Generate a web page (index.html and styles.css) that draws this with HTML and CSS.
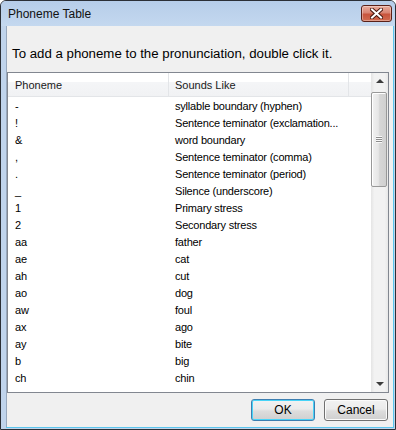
FILE: index.html
```html
<!DOCTYPE html>
<html lang="en">
<head>
    <meta charset="UTF-8">
    <meta name="viewport" content="width=device-width, initial-scale=1.0">
    <title>Phoneme Table</title>
    <link rel="stylesheet" href="styles.css">
</head>
<body>
    <div class="window">
        <div class="titlebar">
            <span class="title">Phoneme Table</span>
            <button class="close" type="button" title="Close">
                <svg width="13" height="11" viewBox="0 0 13 11">
                    <path d="M2 1.5 L11 9.5 M11 1.5 L2 9.5" stroke="#4a1a12" stroke-width="4" stroke-linecap="square"/>
                    <path d="M2 1.5 L11 9.5 M11 1.5 L2 9.5" stroke="#ffffff" stroke-width="2" stroke-linecap="square"/>
                </svg>
            </button>
        </div>
        <div class="client">
            <p class="hint">To add a phoneme to the pronunciation, double click it.</p>
            <div class="listbox">
                <div class="list-main">
                    <div class="header">
                        <div class="col col-ph">Phoneme</div>
                        <div class="col col-sl">Sounds Like</div>
                        <div class="col col-rest"></div>
                    </div>
                    <div class="rows">
                        <div class="row"><span class="cell c1">-</span><span class="cell c2">syllable boundary (hyphen)</span></div>
                        <div class="row"><span class="cell c1">!</span><span class="cell c2">Sentence teminator (exclamation...</span></div>
                        <div class="row"><span class="cell c1">&amp;</span><span class="cell c2">word boundary</span></div>
                        <div class="row"><span class="cell c1">,</span><span class="cell c2">Sentence teminator (comma)</span></div>
                        <div class="row"><span class="cell c1">.</span><span class="cell c2">Sentence teminator (period)</span></div>
                        <div class="row"><span class="cell c1">_</span><span class="cell c2">Silence (underscore)</span></div>
                        <div class="row"><span class="cell c1">1</span><span class="cell c2">Primary stress</span></div>
                        <div class="row"><span class="cell c1">2</span><span class="cell c2">Secondary stress</span></div>
                        <div class="row"><span class="cell c1">aa</span><span class="cell c2">father</span></div>
                        <div class="row"><span class="cell c1">ae</span><span class="cell c2">cat</span></div>
                        <div class="row"><span class="cell c1">ah</span><span class="cell c2">cut</span></div>
                        <div class="row"><span class="cell c1">ao</span><span class="cell c2">dog</span></div>
                        <div class="row"><span class="cell c1">aw</span><span class="cell c2">foul</span></div>
                        <div class="row"><span class="cell c1">ax</span><span class="cell c2">ago</span></div>
                        <div class="row"><span class="cell c1">ay</span><span class="cell c2">bite</span></div>
                        <div class="row"><span class="cell c1">b</span><span class="cell c2">big</span></div>
                        <div class="row"><span class="cell c1">ch</span><span class="cell c2">chin</span></div>
                    </div>
                </div>
                <div class="scrollbar">
                    <div class="arrow arrow-up"></div>
                    <div class="track">
                        <div class="thumb"><span class="grip"></span></div>
                    </div>
                    <div class="arrow arrow-down"></div>
                </div>
            </div>
            <div class="buttons">
                <button class="btn btn-default" type="button">OK</button>
                <button class="btn" type="button">Cancel</button>
            </div>
        </div>
    </div>
</body>
</html>
```

FILE: styles.css
```css
body {
    margin: 0;
    background: #ffffff;
    font-family: "Liberation Sans", Arial, sans-serif;
}
.window {
    width: 396px;
    height: 430px;
    box-sizing: border-box;
    border: 1px solid #2b2f36;
    border-radius: 6px 6px 0 0;
    background: #c0d4ec;
    display: flex;
    flex-direction: column;
    overflow: hidden;
}
.titlebar {
    height: 25px;
    flex: none;
    display: flex;
    align-items: flex-start;
    justify-content: space-between;
    background: linear-gradient(#b6cde9, #c4d8ef);
}
.title {
    margin: 5px 0 0 7px;
    font-size: 12px;
    line-height: 16px;
    color: #111;
}
.close {
    width: 31px;
    height: 17px;
    margin: 4px 3px 0 0;
    padding: 0;
    border: 1px solid #5a2018;
    border-radius: 3px;
    background: linear-gradient(#e9ad9d, #d98472 45%, #c8543c 55%, #d16b50);
    box-shadow: inset 0 0 0 1px rgba(255,255,255,0.35);
    display: flex;
    align-items: center;
    justify-content: center;
}
.client {
    flex: 1;
    margin: 0 2px 2px 5px;
    border-left: 1px solid #98a8bd;
    background: #f0f0f0;
    box-shadow: 1px 0 0 #5ac6ee, 0 1px 0 #5ac6ee, 1px 1px 0 #5ac6ee;
    display: flex;
    flex-direction: column;
    padding: 20px 5px 0 0;
}
.hint {
    margin: 0 0 10px 5px;
    font-size: 13.25px;
    line-height: 16px;
    color: #000;
}
.listbox {
    height: 321px;
    width: 382px;
    box-sizing: border-box;
    border: 1px solid #828790;
    background: #ffffff;
    display: flex;
}
.list-main {
    flex: 1;
    overflow: hidden;
}
.header {
    height: 23px;
    display: flex;
    border-bottom: 1px solid #e3e5e8;
    background: linear-gradient(#ffffff 0, #ffffff 40%, #f4f5f7 40%, #f1f2f4 100%);
    font-size: 11px;
    line-height: 24px;
    color: #1a1a1a;
}
.col {
    box-sizing: border-box;
    border-right: 1px solid #e3e5e8;
}
.col-ph {
    width: 161px;
    padding-left: 7px;
}
.col-sl {
    width: 180px;
    padding-left: 6px;
}
.col-rest {
    flex: 1;
    border-right: none;
}
.rows {
    font-size: 11px;
    letter-spacing: -0.2px;
    color: #000;
}
.row {
    height: 17px;
    line-height: 19px;
    display: flex;
    white-space: nowrap;
}
.c1 {
    width: 161px;
    padding-left: 7px;
    box-sizing: border-box;
}
.c2 {
    padding-left: 6px;
}
.scrollbar {
    width: 17px;
    flex: none;
    display: flex;
    flex-direction: column;
    background: linear-gradient(to right, #e4e4e4, #f2f2f2 20%, #f2f2f2 80%, #e8e8e8);
}
.arrow {
    height: 17px;
    flex: none;
    position: relative;
}
.arrow::after {
    content: "";
    position: absolute;
    left: 5px;
    top: 6px;
    border-left: 4px solid transparent;
    border-right: 4px solid transparent;
}
.arrow-up::after {
    border-bottom: 4px solid #3c3c3c;
}
.arrow-down::after {
    top: 7px;
    border-top: 4px solid #3c3c3c;
}
.track {
    flex: 1;
    padding-top: 2px;
}
.thumb {
    height: 95px;
    margin: 0 1px 0 0;
    box-sizing: border-box;
    border: 1px solid #989898;
    border-radius: 2px;
    background: linear-gradient(to right, #f1f1f1, #e6e6e6 45%, #d6d6d6 55%, #d0d0d0);
    box-shadow: inset 1px 1px 0 #ffffff;
    display: flex;
    align-items: center;
    justify-content: center;
}
.grip {
    width: 6px;
    height: 7px;
    background: repeating-linear-gradient(#f8f8f8 0, #f8f8f8 1px, #8c8c8c 1px, #8c8c8c 2px);
}
.buttons {
    display: flex;
    justify-content: flex-end;
    gap: 9px;
    margin-top: 6px;
}
.btn {
    width: 64px;
    height: 22px;
    padding: 0;
    border: 1px solid #707070;
    border-radius: 3px;
    background: linear-gradient(#f2f2f2, #ebebeb 45%, #dddddd 55%, #cfcfcf);
    box-shadow: inset 0 0 0 1px #fbfbfb;
    font-family: "Liberation Sans", Arial, sans-serif;
    font-size: 12px;
    color: #000;
}
.btn-default {
    border-color: #3c7fb1;
    box-shadow: inset 0 0 0 1px #48d4f8;
}
```
